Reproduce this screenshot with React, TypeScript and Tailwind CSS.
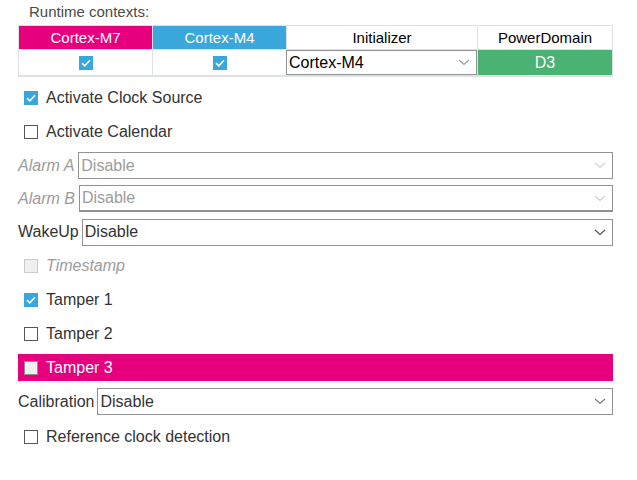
import React from "react";

const font = { fontFamily: '"Liberation Sans", Arial, sans-serif' };

function Check({ kind }: { kind: "on" | "off" | "disabled" | "pink" }) {
  if (kind === "on") {
    return (
      <span className="inline-flex h-[14px] w-[14px] shrink-0 items-center justify-center bg-[#38a7dd]">
        <svg width="10" height="8" viewBox="0 0 10 8">
          <path d="M1 4.2 L3.8 6.8 L9 1.2" fill="none" stroke="white" strokeWidth="1.6" />
        </svg>
      </span>
    );
  }
  if (kind === "disabled") {
    return <span className="inline-block h-[14px] w-[14px] shrink-0 border border-[#c9cbcd] bg-[#eeeff0]" />;
  }
  if (kind === "pink") {
    return <span className="inline-block h-[14px] w-[14px] shrink-0 border-[1.5px] border-[#8d8f91] bg-[#eeeff0]" />;
  }
  return <span className="inline-block h-[14px] w-[14px] shrink-0 border-[1.5px] border-[#555759] bg-white" />;
}

function Chevron({ color }: { color: string }) {
  return (
    <svg width="12" height="7" viewBox="0 0 12 7" className="shrink-0">
      <path d="M1 1 L6 5.5 L11 1" fill="none" stroke={color} strokeWidth="1.3" />
    </svg>
  );
}

function Select({
  value,
  disabled,
  chevron,
  bottomThick,
}: {
  value: string;
  disabled?: boolean;
  chevron: string;
  bottomThick?: boolean;
}) {
  return (
    <div
      className={`flex h-[27px] flex-1 items-center justify-between border border-[#8f9396] bg-white pl-[2px] pr-[6px] ${
        bottomThick ? "border-b-2" : ""
      } ${disabled ? "text-[#9c9c9c]" : "text-[#333]"}`}
    >
      <span>{value}</span>
      <Chevron color={chevron} />
    </div>
  );
}

export default function App() {
  return (
    <div className="h-[480px] w-[637px] bg-white text-[16px] text-[#333]" style={font}>
      <div className="ml-[18px] w-[595px]">
        <div className="flex h-[25px] items-center pl-[11px] text-[15px] text-[#4a4a4a]">Runtime contexts:</div>
        <div className="border border-[#dfe2e5] text-[15px]">
          <div className="flex h-[24px] border-b border-[#dfe2e5] text-center leading-[24px]">
            <div className="w-[133px] bg-[#e6007e] text-white">Cortex-M7</div>
            <div className="w-[134px] border-l border-[#dfe2e5] bg-[#3aa8dc] text-white">Cortex-M4</div>
            <div className="w-[191px] border-l border-[#dfe2e5] text-black">Initializer</div>
            <div className="flex-1 border-l border-[#dfe2e5] text-black">PowerDomain</div>
          </div>
          <div className="flex h-[26px] border-b border-[#dfe2e5]">
            <div className="flex w-[133px] items-center justify-center">
              <Check kind="on" />
            </div>
            <div className="flex w-[134px] items-center justify-center border-l border-[#dfe2e5]">
              <Check kind="on" />
            </div>
            <div className="flex w-[191px] items-center justify-between border border-[#8f9396] pl-[2px] pr-[6px] text-[16px] text-black">
              <span>Cortex-M4</span>
              <Chevron color="#9a9da0" />
            </div>
            <div className="flex flex-1 items-center justify-center border-l border-[#dfe2e5] bg-[#4ab272] text-[16px] text-white">
              D3
            </div>
          </div>
        </div>

        <div className="mt-[4px] flex h-[34px] items-center gap-[8px] pl-[6px]">
          <Check kind="on" />
          <span>Activate Clock Source</span>
        </div>
        <div className="flex h-[34px] items-center gap-[8px] pl-[6px]">
          <Check kind="off" />
          <span>Activate Calendar</span>
        </div>
        <div className="flex h-[33px] items-center gap-[4px]">
          <span className="italic text-[#9c9c9c]">Alarm A</span>
          <Select value="Disable" disabled chevron="#cfd1d3" />
        </div>
        <div className="flex h-[33px] items-center gap-[4px]">
          <span className="italic text-[#9c9c9c]">Alarm B</span>
          <Select value="Disable" disabled chevron="#cfd1d3" bottomThick />
        </div>
        <div className="flex h-[34px] items-center gap-[3px]">
          <span>WakeUp</span>
          <Select value="Disable" chevron="#555759" />
        </div>
        <div className="flex h-[34px] items-center gap-[8px] pl-[6px]">
          <Check kind="disabled" />
          <span className="italic text-[#9c9c9c]">Timestamp</span>
        </div>
        <div className="flex h-[34px] items-center gap-[8px] pl-[6px]">
          <Check kind="on" />
          <span>Tamper 1</span>
        </div>
        <div className="flex h-[34px] items-center gap-[8px] pl-[6px]">
          <Check kind="off" />
          <span>Tamper 2</span>
        </div>
        <div className="mt-[3px] flex h-[27px] items-center gap-[8px] bg-[#e6007e] pl-[6px] text-white">
          <Check kind="pink" />
          <span>Tamper 3</span>
        </div>
        <div className="mt-[7px] flex items-center gap-[3px]">
          <span>Calibration</span>
          <Select value="Disable" chevron="#7a7d80" />
        </div>
        <div className="mt-[5px] flex h-[34px] items-center gap-[8px] pl-[6px]">
          <Check kind="off" />
          <span>Reference clock detection</span>
        </div>
      </div>
    </div>
  );
}
